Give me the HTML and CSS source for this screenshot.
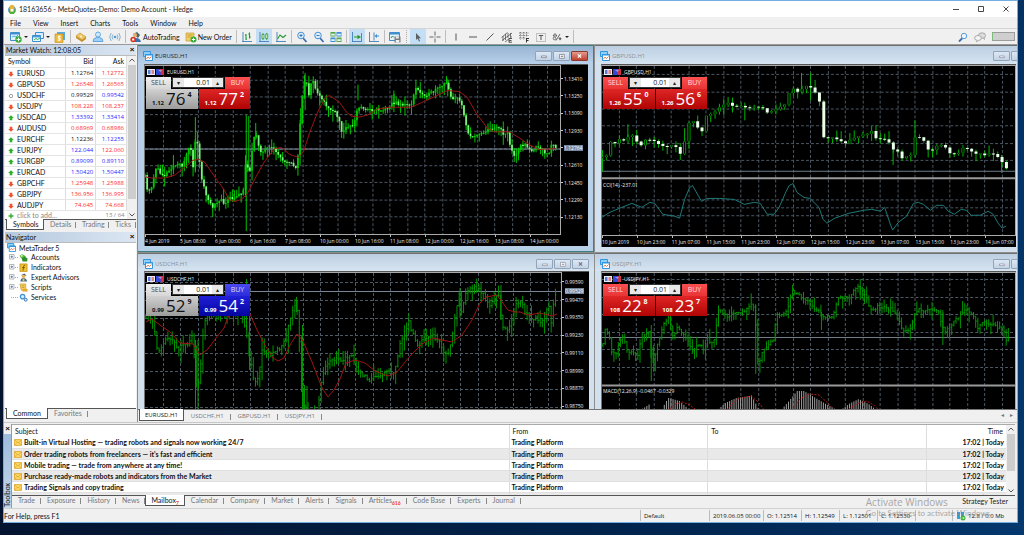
FILE: index.html
```html
<!DOCTYPE html>
<html lang="en">
<head>
<meta charset="utf-8">
<title>18163656 - MetaQuotes-Demo: Demo Account - Hedge</title>
<link rel="stylesheet" href="styles.css">
</head>
<body class="desktop">
<svg class="defs" aria-hidden="true">
  <symbol id="i-logo" viewBox="0 0 12 12"><circle cx="6" cy="7" r="4.600" fill="#3d8fd0"/><path d="M2 8a4 4 0 0 0 8 0l-3-3z" fill="#4caf3f"/><path d="M3 5q0-4 3-4t3 4l-1 4H4z" fill="#e8b73a"/><path d="M4.500 6h3v3h-3z" fill="#fff"/></symbol>
  <symbol id="i-newchart" viewBox="0 0 12 12"><path d="M.5 1.500h9v8h-9z" fill="#e4f2fc" stroke="#3f8fd0"/><path d="M1 2h8.500v1.500H1z" fill="#3f8fd0"/><path d="M2 6l2-1 2 1 2-2" stroke="#4aa7e0" fill="none"/><circle cx="8.500" cy="8.500" r="3.200" fill="#37b034"/><path d="M8.500 6.700v3.600M6.700 8.500h3.600" stroke="#fff"/></symbol>
  <symbol id="i-profiles" viewBox="0 0 12 12"><path d="M3.500 1.500h8v6h-8z" fill="#d9edfb" stroke="#3f8fd0"/><path d="M.5 4.500h8v6h-8z" fill="#eef8ff" stroke="#3f8fd0"/><path d="M1 5h7.500v1.400H1z" fill="#3f9fe0"/><path d="M2 9l2-1.500 1.500 1L8 7" stroke="#34b04a" fill="none"/></symbol>
  <symbol id="i-market" viewBox="0 0 12 12"><path d="M3 1h8v8H3z" fill="#5aa9dc"/><path d="M1 3h8v8.500H1z" fill="#efb93a" stroke="#c98d12" stroke-width=".6"/><path d="M6.800 5.300H4.200v1.900h2v2H3.500M5.200 4.300v6" stroke="#fff" stroke-width=".9" fill="none"/></symbol>
  <symbol id="i-book" viewBox="0 0 12 12"><path d="M1 5l4-3 6 4-4 3z" fill="#f0c964" stroke="#b5851c" stroke-width=".6"/><path d="M1 5v2l6 4 4-3V6L7 9z" fill="#c8902a"/><circle cx="6" cy="5.500" r="1" fill="#fff6d0"/></symbol>
  <symbol id="i-user" viewBox="0 0 12 12"><circle cx="6" cy="3.500" r="2.500" fill="#cde7fb" stroke="#4a9bd8" stroke-width=".8"/><path d="M1 10.500q0-3.500 3.500-4h3q3.500.5 3.500 4z" fill="#9fd0f5" stroke="#4a9bd8" stroke-width=".8"/></symbol>
  <symbol id="i-signal" viewBox="0 0 12 12"><circle cx="6" cy="6" r="1.300" fill="#4a9bd8"/><path d="M4 8.500q-2-2.500 0-5M8 8.500q2-2.500 0-5M2.200 10q-3-4 0-8M9.800 10q3-4 0-8" fill="none" stroke="#6f9fc4" stroke-width=".8"/></symbol>
  <symbol id="i-auto" viewBox="0 0 12 12"><path d="M3 3l4-2 3 3-2 3z" fill="#50606e"/><circle cx="5" cy="4" r="2" fill="#e4b36a"/><path d="M2 11q0-4 4-4t5 4z" fill="#3e6fa8"/><circle cx="3.200" cy="8.500" r="2.800" fill="#d9321f"/><path d="M2.200 7.500h2v2h-2z" fill="#fff"/></symbol>
  <symbol id="i-order" viewBox="0 0 12 12"><path d="M1 2h8v8H1z" fill="#f3cf62" stroke="#bb902a" stroke-width=".6"/><path d="M2.500 4h5M2.500 6h4" stroke="#a3812a" stroke-width=".6"/><circle cx="8.500" cy="8.500" r="3" fill="#2fae36"/><path d="M8.500 6.800v3.400M6.800 8.500h3.400" stroke="#fff"/></symbol>
  <symbol id="i-bars" viewBox="0 0 12 12"><path d="M2 1v10M1 10.500h10" stroke="#3f7fb5" stroke-width=".9"/><path d="M5 3v6M5 4h-1M5 8h1M8.500 1.500v6M8.500 3h-1.200M8.500 6h1.300" stroke="#239a2d" stroke-width="1.100"/></symbol>
  <symbol id="i-candles" viewBox="0 0 12 12"><path d="M2 1v10M1 10.500h10" stroke="#3f7fb5" stroke-width=".9"/><path d="M5 2v7M8.700 2v7" stroke="#239a2d" stroke-width=".8"/><path d="M4 3.500h2v4H4zM7.700 3h2v4.500h-2z" fill="#d6f0c9" stroke="#239a2d" stroke-width=".7"/></symbol>
  <symbol id="i-line" viewBox="0 0 12 12"><path d="M2 1v10M1 10.500h10" stroke="#3f7fb5" stroke-width=".9"/><path d="M2.500 8l2.500-4 3 2.500L11 4" fill="none" stroke="#239a2d" stroke-width="1.100"/></symbol>
  <symbol id="i-zoomin" viewBox="0 0 12 12"><path d="M7 7l3.500 4" stroke="#3c6fae" stroke-width="1.800"/><circle cx="5" cy="4.500" r="3.300" fill="#dceefb" stroke="#4a8fd0"/><path d="M5 3v3M3.500 4.500h3" stroke="#2f6fb0" stroke-width=".9"/></symbol>
  <symbol id="i-zoomout" viewBox="0 0 12 12"><path d="M7 7l3.500 4" stroke="#3c6fae" stroke-width="1.800"/><circle cx="5" cy="4.500" r="3.300" fill="#dceefb" stroke="#4a8fd0"/><path d="M3.500 4.500h3" stroke="#2f6fb0" stroke-width=".9"/></symbol>
  <symbol id="i-tile" viewBox="0 0 12 12"><path d="M.5 1h5v4.500h-5zM6.500 6.500h5V11h-5z" fill="#58a846"/><path d="M6.500 1h5v4.500h-5zM.5 6.500h5V11h-5z" fill="#3b8fd6"/><path d="M1.200 2.800h3.600v1.800H1.200zM7.200 2.800h3.600v1.800H7.200zM1.200 8.300h3.600v1.800H1.200zM7.200 8.300h3.600v1.800H7.200z" fill="#e9f5ff"/></symbol>
  <symbol id="i-autoscroll" viewBox="0 0 12 12"><path d="M1.500 1v10M1 10.500h10M10.500 2v8" stroke="#3f7fb5" stroke-width=".9"/><path d="M3 6h4.500" stroke="#239a2d"/><path d="M6.500 3.800L10 6 6.500 8.200z" fill="#239a2d"/></symbol>
  <symbol id="i-shift" viewBox="0 0 12 12"><path d="M1.500 1v10M1 10.500h10M6 1.500v8" stroke="#3f7fb5" stroke-width=".9"/><path d="M11 5H8" stroke="#3b8fd6"/><path d="M9 3L6.500 5 9 7z" fill="#3b8fd6"/></symbol>
  <symbol id="i-template" viewBox="0 0 12 12"><path d="M.5 1.500h10v8H.5z" fill="#e4f2fc" stroke="#3f8fd0"/><path d="M.5 2h10v1.500H.5z" fill="#3f8fd0"/><path d="M2 7l1.500-2L5 6.500" stroke="#239a2d" fill="none"/><path d="M5.500 5.500h6v6h-6z" fill="#787d82"/><path d="M6.800 5.500h3v2h-3zM6.800 9h3.500v2.500H6.800z" fill="#f1f1f1"/></symbol>
  <symbol id="i-cursor" viewBox="0 0 12 12"><path d="M4 2v7l1.600-1.400L7 10.500l1-.5-1.300-2.700H9z" fill="#5c6166"/></symbol>
  <symbol id="i-cross" viewBox="0 0 12 12"><path d="M6 .5v4M6 7.500v4M.5 6h4M7.500 6h4" stroke="#666"/><path d="M5.500 5.500h1v1h-1z" fill="#666"/></symbol>
  <symbol id="i-vline" viewBox="0 0 12 12"><path d="M6 2.500v7" stroke="#555"/></symbol>
  <symbol id="i-hline" viewBox="0 0 12 12"><path d="M2 6h8" stroke="#555"/></symbol>
  <symbol id="i-trend" viewBox="0 0 12 12"><path d="M2.500 9.500l7-7" stroke="#555"/></symbol>
  <symbol id="i-channel" viewBox="0 0 12 12"><path d="M.5 6.500l6-5M1 9.500L11 2M4 11l7-5.500M2 5v5M4.500 3v6M7 2v5M9.500 2v4" stroke="#555" stroke-width=".8"/><path d="M8 7.500h3M8 7.500v4M8 9.500h2.500M8 11.200h3" stroke="#444" stroke-width=".9"/></symbol>
  <symbol id="i-fibo" viewBox="0 0 12 12"><path d="M1 2h10M1 4.500h10M1 7h7M2.500 1v7.500M5.500 1v7.500M8.500 1v5" stroke="#666" stroke-width=".8" stroke-dasharray="1 .7"/><path d="M8.500 7v4.500M8.500 7.500H11M8.500 9.500h2" stroke="#333"/></symbol>
  <symbol id="i-text" viewBox="0 0 12 12"><path d="M1.500 2.500h9v8h-9z" fill="none" stroke="#777" stroke-width=".8" stroke-dasharray="1 1"/><path d="M3.800 4.500h4.400M6 4.500V9" stroke="#555"/></symbol>
  <symbol id="i-shapes" viewBox="0 0 12 12"><path d="M2 5l2-2.500L6 5zM5 9.500L9 3" fill="none" stroke="#555" stroke-width=".9"/><circle cx="3.500" cy="7.500" r="1.300" fill="none" stroke="#555" stroke-width=".8"/><path d="M7.500 7.500L9 6l1.700 1.700L9 9.500z" fill="#666"/></symbol>
  <symbol id="i-search" viewBox="0 0 12 12"><path d="M2 10.500L5.500 7" stroke="#3c6fae" stroke-width="1.800"/><circle cx="7" cy="5" r="2.700" fill="#eef6fd" stroke="#5a9bd8"/></symbol>
  <symbol id="i-chat" viewBox="0 0 12 12"><ellipse cx="8" cy="4.500" rx="3.500" ry="2.700" fill="#ddd" stroke="#999" stroke-width=".8"/><ellipse cx="4" cy="7" rx="3.400" ry="2.500" fill="#f5f5f5" stroke="#999" stroke-width=".8"/><path d="M3 9l-.5 2L5 9.300M9 7l1.500 1.600V6.500" fill="#eee" stroke="#999" stroke-width=".6"/></symbol>
  <symbol id="i-chart" viewBox="0 0 10 10"><path d="M.5.500h7v5h-7z" fill="#8fd0f8" stroke="#2f95dc"/><path d="M2.500 3.500h7v6h-7z" fill="#fff" stroke="#2f95dc"/><path d="M2.500 3h7v1.500h-7z" fill="#2f95dc"/><path d="M3.500 8l1.500-2 1.500 1.500 2-2" stroke="#e06030" stroke-width=".8" fill="none"/></symbol>
  <symbol id="i-oneclick" viewBox="0 0 8 6"><path d="M0 0h8v6H0z" fill="#e9edf8"/><path d="M1 1h2.500v4H1z" fill="#5977d8"/><path d="M4.500 1H7v4H4.500z" fill="#e08080"/></symbol>
  <symbol id="i-depth" viewBox="0 0 8 6"><path d="M0 0h8v6H0z" fill="#3248d8"/><path d="M4 0h4v6H5z" fill="#d03040"/><path d="M2 1h4L4.500 3z" fill="#999bd8"/></symbol>
  <symbol id="i-up" viewBox="0 0 6 6"><path d="M3 .2L5.800 3H4.300v2.300H1.700V3H.2z" fill="#27b227"/></symbol>
  <symbol id="i-down" viewBox="0 0 6 6"><path d="M3 5.800L.2 3h1.500V.7h2.600V3h1.500z" fill="#f0512e"/></symbol>
  <symbol id="i-same" viewBox="0 0 6 6"><circle cx="3" cy="3" r="1.700" fill="#fff" stroke="#888" stroke-width=".8"/></symbol>
  <symbol id="i-plus" viewBox="0 0 6 6"><path d="M3 .5v5M.5 3h5" stroke="#35b035" stroke-width="1.400"/></symbol>
  <symbol id="i-expand" viewBox="0 0 6 6"><path d="M.5.500h4.500v4.500H.5z" fill="#fff" stroke="#999" stroke-width=".7"/><path d="M2.750 1.500v2.500M1.500 2.750h2.500" stroke="#3c5fa0" stroke-width=".7"/></symbol>
  <symbol id="i-accounts" viewBox="0 0 10 10"><path d="M.5 3l3-2 4 2.500-1 3-4-.5z" fill="#5cbb3c"/><path d="M3 6l3-2 3.500 2-.5 3.500H4z" fill="#2f8f2a"/><circle cx="3" cy="3" r="1.200" fill="#d3f2c0"/></symbol>
  <symbol id="i-indicators" viewBox="0 0 10 10"><path d="M1 1h8v8.500H1z" fill="#f0c030" stroke="#b88a12" stroke-width=".7"/><path d="M6.800 2.500Q5.200 2 5 4L4.500 8.500M3.500 5h3" stroke="#6b4a00" stroke-width=".9" fill="none"/></symbol>
  <symbol id="i-experts" viewBox="0 0 10 10"><path d="M2 2.500L6 .5 8.500 3z" fill="#4d5c66"/><circle cx="5" cy="3.800" r="1.900" fill="#e6b25c"/><path d="M1.500 9.500q0-4 3.500-4t4 4z" fill="#3f6f9c"/><path d="M4 6h2v3.500H4z" fill="#f0c040"/></symbol>
  <symbol id="i-scripts" viewBox="0 0 10 10"><path d="M1 1h6.500v7H2.500z" fill="#f6cf5c" stroke="#c4922a" stroke-width=".7"/><path d="M3 3h3M3 5h3" stroke="#a87b1c" stroke-width=".6"/><path d="M4 6.500h5.500v3H4z" fill="#e9a82a"/></symbol>
  <symbol id="i-services" viewBox="0 0 10 10"><circle cx="4" cy="4" r="2.500" fill="#d9ecfb" stroke="#3f8fd0" stroke-width="1.400"/><circle cx="7.500" cy="7.500" r="1.600" fill="#d9ecfb" stroke="#2f70b8"/></symbol>
  <symbol id="i-mail" viewBox="0 0 8 7"><path d="M.4.600h7.200v5.800H.4z" fill="#ffd96a" stroke="#d9a020" stroke-width=".8"/><path d="M.6 1L4 4l3.400-3M.6 6L3 3.500M7.400 6L5 3.500" fill="none" stroke="#d9a020" stroke-width=".7"/></symbol>
  <symbol id="i-net" viewBox="0 0 10 10"><path d="M1 1h3v7H1zM5 1h3v7H5z" fill="#2fa2e4"/><circle cx="7" cy="7" r="2.500" fill="#3db03b"/><path d="M5.800 7h2.400M7.200 6l1 1-1 1" stroke="#fff" stroke-width=".6" fill="none"/></symbol>
</svg>

<div class="app">
  <header class="titlebar">
    <svg class="ico12"><use href="#i-logo"/></svg>
    <h1 class="titlebar-text">18163656 - MetaQuotes-Demo: Demo Account - Hedge</h1>
    <div class="winbtns">
      <button class="winbtn" aria-label="Minimize"><svg viewBox="0 0 8 8"><path d="M1 4.500h6" stroke="#333" stroke-width=".9"/></svg></button>
      <button class="winbtn" aria-label="Maximize"><svg viewBox="0 0 8 8"><path d="M1.500 1.500h5v5h-5z" fill="none" stroke="#333" stroke-width=".9"/></svg></button>
      <button class="winbtn" aria-label="Close"><svg viewBox="0 0 8 8"><path d="M1.500 1.500l5 5M6.500 1.500l-5 5" stroke="#333" stroke-width=".9"/></svg></button>
    </div>
  </header>
  <nav class="menubar">
    <button>File</button><button>View</button><button>Insert</button><button>Charts</button><button>Tools</button><button>Window</button><button>Help</button>
  </nav>
  <div class="toolbar">
    <button class="tool tool-drop" aria-label="New chart"><svg class="ico12"><use href="#i-newchart"/></svg><i class="caret"></i></button>
    <button class="tool tool-drop" aria-label="Profiles"><svg class="ico12"><use href="#i-profiles"/></svg><i class="caret"></i></button>
    <button class="tool" aria-label="Market"><svg class="ico12"><use href="#i-market"/></svg></button>
    <span class="sep"></span>
    <button class="tool" aria-label="Depth"><svg class="ico12"><use href="#i-book"/></svg></button>
    <button class="tool" aria-label="Account"><svg class="ico12"><use href="#i-user"/></svg></button>
    <button class="tool" aria-label="Signals"><svg class="ico12"><use href="#i-signal"/></svg></button>
    <span class="sep"></span>
    <button class="tool tool-text"><svg class="ico12"><use href="#i-auto"/></svg>AutoTrading</button>
    <button class="tool tool-text"><svg class="ico12"><use href="#i-order"/></svg>New Order</button>
    <span class="sep"></span>
    <button class="tool" aria-label="Bar chart"><svg class="ico12"><use href="#i-bars"/></svg></button>
    <button class="tool on" aria-label="Candlesticks"><svg class="ico12"><use href="#i-candles"/></svg></button>
    <button class="tool" aria-label="Line chart"><svg class="ico12"><use href="#i-line"/></svg></button>
    <span class="sep"></span>
    <button class="tool" aria-label="Zoom in"><svg class="ico12"><use href="#i-zoomin"/></svg></button>
    <button class="tool" aria-label="Zoom out"><svg class="ico12"><use href="#i-zoomout"/></svg></button>
    <button class="tool" aria-label="Tile windows"><svg class="ico12"><use href="#i-tile"/></svg></button>
    <span class="sep"></span>
    <button class="tool on" aria-label="Auto scroll"><svg class="ico12"><use href="#i-autoscroll"/></svg></button>
    <button class="tool" aria-label="Chart shift"><svg class="ico12"><use href="#i-shift"/></svg></button>
    <span class="sep"></span>
    <button class="tool" aria-label="Templates"><svg class="ico12"><use href="#i-template"/></svg></button>
    <span class="sep grip"></span>
    <button class="tool on" aria-label="Cursor"><svg class="ico12"><use href="#i-cursor"/></svg></button>
    <button class="tool" aria-label="Crosshair"><svg class="ico12"><use href="#i-cross"/></svg></button>
    <span class="sep"></span>
    <button class="tool" aria-label="Vertical line"><svg class="ico12"><use href="#i-vline"/></svg></button>
    <button class="tool" aria-label="Horizontal line"><svg class="ico12"><use href="#i-hline"/></svg></button>
    <button class="tool" aria-label="Trendline"><svg class="ico12"><use href="#i-trend"/></svg></button>
    <button class="tool" aria-label="Channel"><svg class="ico12"><use href="#i-channel"/></svg></button>
    <button class="tool" aria-label="Fibonacci"><svg class="ico12"><use href="#i-fibo"/></svg></button>
    <button class="tool" aria-label="Text"><svg class="ico12"><use href="#i-text"/></svg></button>
    <button class="tool tool-drop" aria-label="Shapes"><svg class="ico12"><use href="#i-shapes"/></svg><i class="caret"></i></button>
    <span class="sep"></span>
    <span class="grow"></span>
    <button class="tool" aria-label="Search"><svg class="ico12"><use href="#i-search"/></svg></button>
    <button class="tool" aria-label="Chat"><svg class="ico12"><use href="#i-chat"/></svg></button>
    <span class="level"></span>
  </div>

  <main class="work">
    <aside class="side">
      <section class="panel watch">
        <div class="panel-head"><h2>Market Watch: 12:08:05</h2><button class="x" aria-label="Close">×</button></div>
        <div class="watch-body">
          <table class="quotes">
            <colgroup><col class="c-sym"><col class="c-num"><col class="c-num"></colgroup>
            <thead><tr><th>Symbol</th><th>Bid</th><th>Ask</th></tr></thead>
            <tbody>
            <tr><td><svg class="ico6"><use href="#i-down"/></svg>EURUSD</td><td>1.12764</td><td class="dn">1.12772</td></tr>
            <tr><td><svg class="ico6"><use href="#i-down"/></svg>GBPUSD</td><td class="dn">1.26548</td><td class="dn">1.26565</td></tr>
            <tr><td><svg class="ico6"><use href="#i-same"/></svg>USDCHF</td><td>0.99529</td><td class="up">0.99542</td></tr>
            <tr><td><svg class="ico6"><use href="#i-down"/></svg>USDJPY</td><td class="dn">108.228</td><td class="dn">108.237</td></tr>
            <tr><td><svg class="ico6"><use href="#i-up"/></svg>USDCAD</td><td class="up">1.33392</td><td class="up">1.33414</td></tr>
            <tr><td><svg class="ico6"><use href="#i-down"/></svg>AUDUSD</td><td class="dn">0.68969</td><td class="dn">0.68986</td></tr>
            <tr><td><svg class="ico6"><use href="#i-up"/></svg>EURCHF</td><td>1.12236</td><td class="up">1.12255</td></tr>
            <tr><td><svg class="ico6"><use href="#i-up"/></svg>EURJPY</td><td class="up">122.044</td><td class="dn">122.060</td></tr>
            <tr><td><svg class="ico6"><use href="#i-up"/></svg>EURGBP</td><td class="up">0.89099</td><td class="up">0.89110</td></tr>
            <tr><td><svg class="ico6"><use href="#i-up"/></svg>EURCAD</td><td class="up">1.50420</td><td class="up">1.50447</td></tr>
            <tr><td><svg class="ico6"><use href="#i-down"/></svg>GBPCHF</td><td class="dn">1.25948</td><td class="dn">1.25988</td></tr>
            <tr><td><svg class="ico6"><use href="#i-down"/></svg>GBPJPY</td><td class="dn">136.956</td><td class="dn">136.995</td></tr>
            <tr><td><svg class="ico6"><use href="#i-down"/></svg>AUDJPY</td><td class="dn">74.645</td><td class="dn">74.668</td></tr>
            <tr class="add"><td><svg class="ico6"><use href="#i-plus"/></svg>click to add...</td><td colspan="2">13 / 64</td></tr>
            </tbody>
          </table>
          <div class="scroll"><svg viewBox="0 0 8 8"><path d="M1.500 5L4 2.500 6.500 5" fill="none" stroke="#555"/></svg><i class="thumb"></i><svg viewBox="0 0 8 8"><path d="M1.500 3L4 5.500 6.500 3" fill="none" stroke="#555"/></svg></div>
        </div>
        <div class="tabs"><button class="tab active">Symbols</button><button class="tab">Details</button><button class="tab">Trading</button><button class="tab">Ticks</button></div>
      </section>
      <section class="panel navi">
        <div class="panel-head"><h2>Navigator</h2><button class="x" aria-label="Close">×</button></div>
        <ul class="tree">
          <li class="root"><svg class="ico10"><use href="#i-chart"/></svg>MetaTrader 5</li>
          <li><svg class="ico6"><use href="#i-expand"/></svg><i class="dash"></i><svg class="ico10"><use href="#i-accounts"/></svg>Accounts</li>
          <li><svg class="ico6"><use href="#i-expand"/></svg><i class="dash"></i><svg class="ico10"><use href="#i-indicators"/></svg>Indicators</li>
          <li><svg class="ico6"><use href="#i-expand"/></svg><i class="dash"></i><svg class="ico10"><use href="#i-experts"/></svg>Expert Advisors</li>
          <li><svg class="ico6"><use href="#i-expand"/></svg><i class="dash"></i><svg class="ico10"><use href="#i-scripts"/></svg>Scripts</li>
          <li class="leaf"><i class="dash dash-long"></i><svg class="ico10"><use href="#i-services"/></svg>Services</li>
        </ul>
        <div class="tabs"><button class="tab active">Common</button><button class="tab">Favorites</button></div>
      </section>
    </aside>

    <section class="mdi">
      <div class="windows">
        <article class="win active">
          <div class="win-head"><svg class="ico10"><use href="#i-chart"/></svg><h3>EURUSD,H1</h3>
            <div class="ctl"><button aria-label="Minimize"><svg viewBox="0 0 17 10"><path d="M6 5h6v2H6z" fill="#fff" stroke="#556" stroke-width=".7"/></svg></button><button aria-label="Restore"><svg viewBox="0 0 17 10"><path d="M6 3h6v5H6zM8 5h2v1H8z" fill="#fff" stroke="#556" stroke-width=".7"/></svg></button><button class="ctl-close" aria-label="Close"><svg viewBox="0 0 17 10"><path d="M6.500 3l4 4M10.500 3l-4 4" stroke="#fff" stroke-width="1.600"/></svg></button></div>
          </div>
          <div class="chart">
            <div class="plot">
              <svg class="canvas" id="eurusd" viewBox="145 65 416 171" preserveAspectRatio="none"></svg>
              <div class="deal">
                <div class="deal-name"><svg class="ico8"><use href="#i-oneclick"/></svg><svg class="ico8"><use href="#i-depth"/></svg>EURUSD,H1</div>
                <div class="deal-top"><button class="side-btn gray">SELL</button><div class="vol"><button aria-label="Less">▾</button><input aria-label="Volume" value="0.01"><button aria-label="More">▴</button></div><button class="side-btn red">BUY</button></div>
                <div class="deal-low"><button class="price gray"><small>1.12</small><b>76</b><sup>4</sup></button><button class="price red"><small>1.12</small><b>77</b><sup>2</sup></button></div>
              </div>
            </div>
            <div class="prices"><span>1.13410</span><span>1.13250</span><span>1.13090</span><span>1.12930</span><span><mark>1.12764</mark></span><span>1.12610</span><span>1.12450</span><span>1.12290</span><span>1.12130</span></div>
            <div class="dates"><span>4 Jun 2019</span><span>5 Jun 08:00</span><span>6 Jun 00:00</span><span>6 Jun 16:00</span><span>7 Jun 08:00</span><span>10 Jun 00:00</span><span>10 Jun 16:00</span><span>11 Jun 08:00</span><span>12 Jun 00:00</span><span>12 Jun 16:00</span><span>13 Jun 08:00</span><span>14 Jun 00:00</span></div>
          </div>
        </article>

        <article class="win cut">
          <div class="win-head"><svg class="ico10"><use href="#i-chart"/></svg><h3>GBPUSD,H1</h3>
            <div class="ctl"><button aria-label="Minimize"><svg viewBox="0 0 17 10"><path d="M6 5h6v2H6z" fill="#fff" stroke="#778" stroke-width=".7"/></svg></button><button aria-label="Restore"><svg viewBox="0 0 17 10"><path d="M6 3h6v5H6zM8 5h2v1H8z" fill="#fff" stroke="#778" stroke-width=".7"/></svg></button></div>
          </div>
          <div class="chart no-axis">
            <div class="plot">
              <svg class="canvas" id="gbpusd" viewBox="602 65 415 171" preserveAspectRatio="none"></svg>
              <div class="deal">
                <div class="deal-name"><svg class="ico8"><use href="#i-oneclick"/></svg><svg class="ico8"><use href="#i-depth"/></svg>GBPUSD,H1</div>
                <div class="deal-top"><button class="side-btn red">SELL</button><div class="vol"><button aria-label="Less">▾</button><input aria-label="Volume" value="0.01"><button aria-label="More">▴</button></div><button class="side-btn red">BUY</button></div>
                <div class="deal-low"><button class="price red"><small>1.26</small><b>55</b><sup>0</sup></button><button class="price red"><small>1.26</small><b>56</b><sup>6</sup></button></div>
              </div>
              <span class="study study-cci">CCI(14) -237.01</span>
            </div>
            <div class="dates"><span>10 Jun 2019</span><span>10 Jun 23:00</span><span>11 Jun 07:00</span><span>11 Jun 15:00</span><span>11 Jun 23:00</span><span>12 Jun 07:00</span><span>12 Jun 15:00</span><span>12 Jun 23:00</span><span>13 Jun 07:00</span><span>13 Jun 15:00</span><span>13 Jun 23:00</span><span>14 Jun 07:00</span></div>
          </div>
        </article>

        <article class="win low">
          <div class="win-head"><svg class="ico10"><use href="#i-chart"/></svg><h3>USDCHF,H1</h3>
            <div class="ctl"><button aria-label="Minimize"><svg viewBox="0 0 17 10"><path d="M6 5h6v2H6z" fill="#fff" stroke="#778" stroke-width=".7"/></svg></button><button aria-label="Restore"><svg viewBox="0 0 17 10"><path d="M6 3h6v5H6zM8 5h2v1H8z" fill="#fff" stroke="#778" stroke-width=".7"/></svg></button><button aria-label="Close"><svg viewBox="0 0 17 10"><path d="M6.500 3l4 4M10.500 3l-4 4" stroke="#778" stroke-width="1.600"/></svg></button></div>
          </div>
          <div class="chart">
            <div class="plot">
              <svg class="canvas" id="usdchf" viewBox="145 273 416 136" preserveAspectRatio="none"></svg>
              <div class="deal">
                <div class="deal-name"><svg class="ico8"><use href="#i-oneclick"/></svg><svg class="ico8"><use href="#i-depth"/></svg>USDCHF,H1</div>
                <div class="deal-top"><button class="side-btn gray">SELL</button><div class="vol"><button aria-label="Less">▾</button><input aria-label="Volume" value="0.01"><button aria-label="More">▴</button></div><button class="side-btn blue">BUY</button></div>
                <div class="deal-low"><button class="price gray"><small>0.99</small><b>52</b><sup>9</sup></button><button class="price blue"><small>0.99</small><b>54</b><sup>2</sup></button></div>
              </div>
            </div>
            <div class="prices"><mark class="now">0.99529</mark><span>0.99590</span><span>0.99470</span><span>0.99350</span><span>0.99230</span><span>0.99110</span><span>0.98990</span><span>0.98870</span><span>0.98750</span></div>
          </div>
        </article>

        <article class="win low cut">
          <div class="win-head"><svg class="ico10"><use href="#i-chart"/></svg><h3>USDJPY,H1</h3>
            <div class="ctl"><button aria-label="Minimize"><svg viewBox="0 0 17 10"><path d="M6 5h6v2H6z" fill="#fff" stroke="#778" stroke-width=".7"/></svg></button><button aria-label="Restore"><svg viewBox="0 0 17 10"><path d="M6 3h6v5H6zM8 5h2v1H8z" fill="#fff" stroke="#778" stroke-width=".7"/></svg></button></div>
          </div>
          <div class="chart no-axis">
            <div class="plot">
              <svg class="canvas" id="usdjpy" viewBox="602 273 415 136" preserveAspectRatio="none"></svg>
              <div class="deal">
                <div class="deal-name"><svg class="ico8"><use href="#i-oneclick"/></svg><svg class="ico8"><use href="#i-depth"/></svg>USDJPY,H1</div>
                <div class="deal-top"><button class="side-btn red">SELL</button><div class="vol"><button aria-label="Less">▾</button><input aria-label="Volume" value="0.01"><button aria-label="More">▴</button></div><button class="side-btn red">BUY</button></div>
                <div class="deal-low"><button class="price red"><small>108</small><b>22</b><sup>8</sup></button><button class="price red"><small>108</small><b>23</b><sup>7</sup></button></div>
              </div>
              <span class="study study-macd">MACD(12,26,9) -0.0467 -0.0329</span>
            </div>
          </div>
        </article>
      </div>
      <div class="tabs chart-tabs"><button class="tab active">EURUSD,H1</button><button class="tab">USDCHF,H1</button><button class="tab">GBPUSD,H1</button><button class="tab">USDJPY,H1</button><span class="grow"></span><span class="arrows"><i>◂</i><i>▸</i></span></div>
    </section>
  </main>

  <section class="toolbox">
    <div class="strip"><button class="x" aria-label="Close">×</button><span class="strip-name">Toolbox</span></div>
    <div class="box">
      <div class="mail-wrap">
        <table class="mail">
          <colgroup><col class="m-subject"><col class="m-from"><col class="m-to"><col class="m-time"></colgroup>
          <thead><tr><th>Subject</th><th>From</th><th>To</th><th>Time</th></tr></thead>
          <tbody>
          <tr><td><svg class="ico-mail"><use href="#i-mail"/></svg>Built-in Virtual Hosting — trading robots and signals now working 24/7</td><td>Trading Platform</td><td></td><td>17:02 | Today</td></tr>
          <tr><td><svg class="ico-mail"><use href="#i-mail"/></svg>Order trading robots from freelancers — it's fast and efficient</td><td>Trading Platform</td><td></td><td>17:02 | Today</td></tr>
          <tr><td><svg class="ico-mail"><use href="#i-mail"/></svg>Mobile trading — trade from anywhere at any time!</td><td>Trading Platform</td><td></td><td>17:02 | Today</td></tr>
          <tr><td><svg class="ico-mail"><use href="#i-mail"/></svg>Purchase ready-made robots and indicators from the Market</td><td>Trading Platform</td><td></td><td>17:02 | Today</td></tr>
          <tr><td><svg class="ico-mail"><use href="#i-mail"/></svg>Trading Signals and copy trading</td><td>Trading Platform</td><td></td><td>17:02 | Today</td></tr>
          <tr><td><svg class="ico-mail"><use href="#i-mail"/></svg>Welcome!</td><td>Trading Platform</td><td></td><td>17:02 | Today</td></tr>
          </tbody>
        </table>
        <div class="scroll"><svg viewBox="0 0 8 8"><path d="M1.500 5L4 2.500 6.500 5" fill="none" stroke="#555"/></svg><i class="thumb"></i><svg viewBox="0 0 8 8"><path d="M1.500 3L4 5.500 6.500 3" fill="none" stroke="#555"/></svg></div>
      </div>
      <div class="tabs box-tabs"><button class="tab">Trade</button><button class="tab">Exposure</button><button class="tab">History</button><button class="tab">News</button><button class="tab active">Mailbox<sub>7</sub></button><button class="tab">Calendar</button><button class="tab">Company</button><button class="tab">Market</button><button class="tab">Alerts</button><button class="tab">Signals</button><button class="tab">Articles<sub>616</sub></button><button class="tab">Code Base</button><button class="tab">Experts</button><button class="tab">Journal</button><span class="grow"></span><button class="tester">Strategy Tester</button></div>
    </div>
  </section>

  <footer class="status">
    <span class="help">For Help, press F1</span>
    <span class="cell s-profile">Default</span>
    <span class="cell s-time">2019.06.05 00:00</span>
    <span class="cell s-val">O: 1.12514</span>
    <span class="cell s-val">H: 1.12549</span>
    <span class="cell s-val">L: 1.12501</span>
    <span class="cell s-val">C: 1.12530</span>
    <span class="cell s-gap"></span>
    <span class="cell s-net"><svg class="ico10"><use href="#i-net"/></svg>12.8 / 0.0 Mb</span>
  </footer>
</div>
<div class="activate"><p class="activate-title">Activate Windows</p><p class="activate-note">Go to Settings to activate Windows.</p></div>
<script src="charts.js"></script>
</body>
</html>
```

FILE: styles.css
```css
* { box-sizing: border-box; }
button, input {
  font: inherit; color: inherit; background: none; border: 0; padding: 0; margin: 0;
  min-width: 0; border-radius: 0;
}
h1, h2, h3, p, ul { margin: 0; padding: 0; font-size: inherit; font-weight: normal; }
.defs { display: none; }
.desktop {
  margin: 0; height: 100vh; overflow: hidden;
  display: flex; flex-direction: column;
  padding: 0 6px 12px 3px;
  font: 7px/10px Lato, "Open Sans", sans-serif; color: #111;
  background: linear-gradient(100deg, #04122c 0%, #041b3c 35%, #00224a 60%, #032c5c 85%, #04386e 100%);
}
.app {
  flex: 1; min-height: 0; display: flex; flex-direction: column;
  background: #f0f0f0; border: 1px solid #74aee0;
}
.grow { flex: 1; }
.ico12, .ico10, .ico8, .ico6, .ico-mail { flex: none; display: block; }
.ico12 { width: 12px; height: 12px; }
.ico10 { width: 10px; height: 10px; }
.ico8 { width: 8px; height: 6px; }
.ico6 { width: 6px; height: 6px; }
.ico-mail { width: 8px; height: 7px; }

.titlebar { flex: none; height: 16px; display: flex; align-items: center; background: #fff; padding: 0 7px 0 2px; gap: 1px; }
.titlebar .ico12 { width: 10px; height: 10px; margin-left: 1px; }
.titlebar-text { padding-left: 1px; flex: 1; color: #222; }
.winbtns { display: flex; gap: 17px; }
.winbtn, .winbtn svg { width: 8px; height: 8px; display: block; }

.menubar { flex: none; height: 11px; display: flex; align-items: center; gap: 12px; padding-left: 6px; }

.toolbar {
  flex: none; height: 17px; display: flex; align-items: center; gap: 1px;
  padding: 0 2px 0 4px; border-top: 1px solid #d4d4d4; border-bottom: 1px solid #9a9a9a;
}
.tool { flex: none; width: 16px; height: 15px; display: flex; align-items: center; justify-content: center; }
.tool.on { background: #c3def5; }
.tool-drop { width: 21px; gap: 2px; }
.tool-text { width: auto; gap: 1px; padding: 0 2px; }
.caret { border: 2px solid transparent; border-top-color: #222; border-bottom: 0; }
.sep { flex: none; width: 1px; height: 13px; background: #bdbdbd; margin: 0 1px; }
.grip { background: repeating-linear-gradient(#aaa 0 1px, transparent 1px 2px); margin: 0 2px; }
.level { width: 23px; height: 9px; background: #cfcfcf; border: 1px solid #9c9c9c; border-left: 1px solid #7dbb7d; margin-left: 3px; }

.work { flex: 1; min-height: 0; display: flex; }
.side { flex: none; width: 134px; display: flex; flex-direction: column; gap: 2px; padding: 0 1px 3px 1px; border-right: 1px solid #8b8b8b; }
.panel { display: flex; flex-direction: column; }
.panel-head { height: 10px; display: flex; align-items: center; justify-content: space-between; padding: 0 1px; background: linear-gradient(90deg, #b4c8de, #dbe6f2); }
.x { font: bold 8px/8px "Liberation Sans", sans-serif; width: 6px; }
.watch-body { display: flex; height: 164px; overflow: hidden; background: #fff; border-top: 1px solid #bbb; }
.quotes { flex: 1; height: max-content; border-collapse: collapse; table-layout: fixed; }
.quotes th, .quotes td { padding: 0 2px; height: 11px; line-height: 10px; text-align: right; border-right: 1px solid #ddd; border-bottom: 1px solid #e4e4e4; white-space: nowrap; font-weight: normal; }
.quotes td + td { font: 6px/10px "Open Sans", sans-serif; }
.quotes th:first-child, .quotes td:first-child { text-align: left; padding-left: 3px; }
.quotes td .ico6 { display: inline-block; margin: 0 3px 0 0; vertical-align: -1px; }
.quotes .up { color: #2a2aff; }
.quotes .dn { color: #ff2a2a; }
.quotes .add td { color: #888; border: 0; line-height: 8px; vertical-align: top; }
.c-sym { width: 60px; }
.scroll { flex: none; width: 9px; display: flex; flex-direction: column; align-items: center; background: #f0f0f0; }
.scroll svg { flex: none; width: 8px; height: 9px; }
.thumb { flex: 1; width: 8px; background: #cdcdcd; }
.watch .thumb { margin-bottom: 11px; }

.tabs { flex: none; display: flex; height: 11px; align-items: flex-start; border-top: 1px solid #555; padding-left: 1px; color: #777; }
.tab { position: relative; height: 9px; line-height: 9px; padding: 0 6px; white-space: nowrap; }
.tab::after { content: ""; position: absolute; right: 0; top: 2px; bottom: 1px; border-right: 1px solid #888; }
.tab.active { height: 11px; margin-top: -1px; line-height: 11px; background: #fff; color: #111; border: 1px solid #555; border-top: 0; }
.tab.active::after { display: none; }
.tab sub { font-size: 5px; font-weight: bold; line-height: 0; color: #f03a2a; vertical-align: -2px; }

.navi { flex: 1; min-height: 0; }
.tree { flex: 1; background: #fff; list-style: none; border-top: 1px solid #bbb; padding-left: 1px; }
.tree li { display: flex; align-items: center; height: 10px; padding-left: 3px; }
.tree .ico10 { width: 9px; height: 9px; margin-right: 3px; }
.tree .root { padding-left: 1px; height: 9px; }
.dash { width: 3px; border-top: 1px dotted #aaa; margin-right: 1px; }
.tree .leaf { padding-left: 5px; }
.dash-long { width: 7px; }

.mdi { flex: 1; min-width: 0; display: flex; flex-direction: column; }
.windows { flex: 1; min-height: 0; display: grid; grid-template-columns: 456fr 422fr; grid-template-rows: 207fr 156fr; background: #8d8d8d; gap: 1px; overflow: hidden; }
.win { min-width: 0; min-height: 0; overflow: hidden; display: flex; flex-direction: column; padding: 0 5px 5px 6px; background: #d3e0ee; border-top: 1px solid #707070; }
.win.active { background: #b8cfe8; border: 0 solid #3c8080; border-width: 1px 1px 1px 0; }
.win.low { padding-bottom: 0; }
.win.cut { padding-right: 1px; }
.win-head { flex: none; height: 18px; display: flex; align-items: center; gap: 2px; margin: 0 -5px 0 -6px; padding: 2px 5px 0; background: linear-gradient(#bccfe2, #d7e4f1); color: #8a929c; }
.active .win-head { background: linear-gradient(#98b4d2, #b9d1ea); color: #222; }
.low .win-head { height: 17px; }
.win-head h3 { flex: 1; font: 6px/10px "Open Sans", sans-serif; }
.ctl { display: flex; gap: 1px; }
.cut .ctl { margin-right: -12px; }
.ctl button { width: 17px; height: 10px; border: 1px solid #93a4b8; border-radius: 1px; background: linear-gradient(#dce8f4, #c3d4e6); }
.ctl svg { display: block; width: 15px; height: 8px; }
.ctl .ctl-close { background: linear-gradient(#e29a8c, #c2402c); border-color: #8a3a30; }
.chart {
  flex: 1; min-height: 0; display: grid; grid-template-columns: minmax(0, 1fr) 27px; grid-template-rows: minmax(0, 1fr) 11px;
  background: #000; color: #eee; font: 5px/6px "Open Sans", sans-serif; border-left: 1px solid #777; border-top: 1px solid #555;
}
.chart.no-axis { grid-template-columns: minmax(0, 1fr); }
.low .chart { grid-template-rows: minmax(0, 1fr); }
.plot { display: grid; grid-template: minmax(0, 1fr) / minmax(0, 1fr); overflow: hidden; border: 1px solid #aaa; border-left: 0; }
.low .plot { border-bottom: 0; }
.canvas { grid-area: 1 / 1; width: 100%; height: 100%; display: block; }
.prices { position: relative; display: flex; flex-direction: column; padding: 5px 0 9px; overflow: hidden; }
.prices span { flex: 1; display: flex; align-items: center; gap: 1px; }
.prices span::before { content: ""; width: 2px; height: 1px; background: #ccc; }
.low .prices { padding: 1px 0 0; margin-bottom: -6px; }
.prices mark { background: #7488a0; color: #fff; padding: 0 1px 0 0; }
.prices .now { position: absolute; left: 3px; top: 16px; }
.dates { display: grid; grid-template-columns: repeat(11, minmax(0, 35fr)) minmax(0, 31fr); align-items: start; }
.dates span { white-space: nowrap; padding-top: 3px; background: linear-gradient(#bbb, #bbb) 0 0 / 1px 2px no-repeat; }
.study { grid-area: 1 / 1; align-self: start; justify-self: start; padding-left: 1px; }
.study-cci { margin-top: 116px; }
.study-macd { margin-top: 115px; }

.deal { grid-area: 1 / 1; align-self: start; justify-self: start; width: 105px; padding: 2px 0 0 1px; }
.deal-name { display: flex; align-items: center; gap: 1px; height: 7px; padding-left: 1px; margin-bottom: 2px; }
.deal-name .ico8 + .ico8 { margin-right: 2px; }
.deal-top { display: grid; grid-template-columns: 25px 1fr 25px; }
.side-btn { height: 12px; font-size: 7px; line-height: 12px; }
.vol { display: grid; grid-template-columns: 11px 1fr 11px; height: 11px; margin: 0 1px; border: 1px solid #333; background: #e8e8e8; color: #222; align-items: stretch; }
.vol input { background: #fff; text-align: right; font-size: 7px; width: 100%; padding: 0 2px 0 0; }
.vol button { font: 6px/9px "DejaVu Sans", sans-serif; }
.deal-low { display: grid; grid-template-columns: 1fr 1fr; gap: 1px; }
.price { height: 20px; display: flex; align-items: center; justify-content: center; gap: 2px; }
.price small { font-size: 6px; font-weight: bold; line-height: 8px; align-self: flex-end; padding-bottom: 2px; }
.price b { font-size: 17px; line-height: 20px; font-weight: normal; }
.price sup { font-size: 7px; font-weight: bold; line-height: 8px; align-self: flex-start; padding-top: 2px; }
.side-btn.gray { background: linear-gradient(#f0f0f0, #d6d6d6); color: #444; }
.price.gray { background: linear-gradient(#d0d0d0, #9c9c9c); color: #111; }
.side-btn.red { background: linear-gradient(#fb5050, #e83434); color: #ffdede; }
.price.red { background: linear-gradient(#e02626, #b00404); color: #fff; }
.side-btn.blue { background: linear-gradient(#4a4af0, #2c2cdc); color: #dedeff; }
.price.blue { background: linear-gradient(#2020d8, #0404a0); color: #fff; }

.chart-tabs { height: 13px; border-top: 1px solid #777; background: #f0f0f0; }
.chart-tabs .tab { padding: 0 7px; margin-top: 2px; font: 6px/9px "Open Sans", sans-serif; }
.chart-tabs .tab.active { margin-top: -1px; height: 12px; line-height: 12px; padding: 0 5px; }
.arrows { display: flex; gap: 6px; padding-right: 4px; font: 6px/10px "DejaVu Sans", sans-serif; }
.arrows i { font-style: normal; }

.toolbox { flex: none; height: 86px; display: flex; border-top: 1px solid #c8c8c8; padding: 1px 2px 0 0; }
.strip { width: 7px; display: flex; flex-direction: column; align-items: center; padding-top: 1px; }
.strip-name { flex: 1; width: 7px; margin-top: 1px; writing-mode: vertical-rl; transform: rotate(180deg); line-height: 7px; background: linear-gradient(#c5d8ec, #9dbbdc); text-align: left; padding-top: 1px; }
.box { flex: 1; min-width: 0; display: flex; flex-direction: column; border-left: 1px solid #999; }
.mail-wrap { height: 71px; display: flex; overflow: hidden; background: #fff; border-top: 1px solid #aaa; }
.mail { flex: 1; height: max-content; table-layout: fixed; border-collapse: collapse; font-weight: bold; }
.mail th { font-weight: normal; text-align: left; height: 12px; padding: 0 3px; border-right: 1px solid #ddd; }
.mail td { height: 11px; line-height: 10px; padding: 0 2px; border-right: 1px solid #ddd; border-bottom: 1px solid #e0e0e0; white-space: nowrap; }
.mail tbody tr:nth-child(even) { background: #e9e9e9; }
.mail th:last-child, .mail td:last-child { text-align: right; border-right: 0; }
.mail .ico-mail { display: inline-block; vertical-align: -1px; margin-right: 2px; }
.m-subject { width: 50%; }
.m-from { width: 20%; }
.m-to { width: 22%; }
.m-time { width: 8%; }
.mail-wrap .thumb { flex: 0 0 37px; margin-bottom: auto; }
.box-tabs { padding-left: 0; height: 12px; }
.box-tabs .tab.active { padding: 0 5px; }
.tester { color: #222; padding-right: 7px; line-height: 11px; }

.status { flex: none; height: 14px; display: flex; align-items: center; border-top: 1px solid #d0d0d0; }
.help { flex: 1; }
.cell { border-left: 1px solid #bbb; padding-left: 3px; height: 11px; white-space: nowrap; display: flex; align-items: center; font: 6px/10px "Open Sans", sans-serif; }
.s-profile { width: 69px; }
.s-time { width: 54px; }
.s-val { width: 38px; }
.s-gap { width: 37px; }
.s-net { width: 65px; gap: 2px; }

.activate { position: absolute; right: 32px; bottom: 17px; color: #888; opacity: .7; }
.activate-title { font: 10px/12px "Open Sans", sans-serif; }
.activate-note { font-size: 8px; line-height: 10px; }
```

FILE: charts.js
```js
const NS = 'http://www.w3.org/2000/svg';

function path(svg, d, stroke, width, extra) {
  const p = document.createElementNS(NS, 'path');
  p.setAttribute('d', d);
  p.setAttribute('fill', 'none');
  p.setAttribute('stroke', stroke);
  p.setAttribute('stroke-width', width);
  Object.entries(extra || {}).forEach(([k, v]) => p.setAttribute(k, v));
  svg.appendChild(p);
}

function pairs(text) {
  return text.trim().split(/\s+/).map(s => s.split(',').map(Number));
}

function at(points, x) {
  for (let i = 1; i < points.length; i++) {
    const [x0, y0] = points[i - 1];
    const [x1, y1] = points[i];
    if (x <= x1) return y0 + (y1 - y0) * Math.max(0, (x - x0) / (x1 - x0));
  }
  return points[points.length - 1][1];
}

function random(seed) {
  return () => {
    seed = (seed * 16807) % 2147483647;
    return seed / 2147483647;
  };
}

function grid(svg, box, rows, first) {
  let d = '';
  rows.forEach(y => { d += `M${box.x0} ${y}H${box.x1}`; });
  for (let x = first; x < box.x1; x += 17.5) d += `M${Math.round(x) + 0.5} ${box.y0}V${box.y1}`;
  path(svg, d, '#4c5864', 1, { 'stroke-dasharray': '3 2' });
}

function curve(svg, points, color, extra) {
  path(svg, 'M' + points.map(p => p.join(' ')).join('L'), color, 1, extra);
}

/* Candles or bars that follow the given price track. */
function series(svg, points, opt) {
  const rnd = random(opt.seed);
  let wick = '', full = '', hollow = '';
  const end = points[points.length - 1][0];
  let open = points[0][1];
  for (let x = points[0][0]; x <= end; x += opt.step) {
    const close = at(points, x) + (rnd() - 0.5) * opt.noise;
    const top = Math.min(open, close), low = Math.max(open, close);
    const hi = top - rnd() * rnd() * opt.wick, lo = low + rnd() * rnd() * opt.wick;
    wick += `M${x} ${hi}V${lo + 1}`;
    if (opt.bars) {
      wick += `M${x - 1} ${open}H${x}M${x} ${close}H${x + 1}`;
    } else if (close > open) {
      full += `M${x} ${top}V${Math.max(low, top + 1)}`;
    } else {
      hollow += `M${x} ${top}V${Math.max(low, top + 1)}`;
    }
    open = close;
  }
  (opt.spikes || []).forEach(([x, a, b]) => { wick += `M${x} ${a}V${b}`; });
  path(svg, wick, opt.color, opt.line);
  if (opt.bars) return;
  path(svg, hollow, opt.color, opt.body);
  if (opt.body > 2) path(svg, hollow, '#000', opt.body - 1.600);
  path(svg, full, opt.fill, opt.body);
}

const eur = document.getElementById('eurusd');
grid(eur, { x0: 145, x1: 561, y0: 65, y1: 236 }, [79.5, 96.5, 114.5, 131.5, 149.5, 166.5, 183.5, 201.5, 218.5], 162.5);
path(eur, 'M145 149.500H561', '#8794a8', 1);
series(eur, pairs(`145,178 148,196 152,186 156,168 160,174 165,176 170,169 175,166 182,166 186,158 190,142 193,170
  196,136 199,155 202,180 206,196 212,209 216,203 221,202 226,205 230,200 236,200 240,192 243,198 246,162 250,172 253,146
  256,132 260,150 264,153 268,149 275,150 282,160 290,162 296,170 298,158 300,140 301,105 304,90 306,75 309,95 312,78
  316,88 322,100 328,107 335,112 340,122 343,135 347,124 352,127 355,122 358,108 363,107 370,110 378,109 385,110 392,103
  400,103 405,105 413,103 416,87 422,93 430,94 436,90 445,84 448,82 452,97 458,98 463,105 466,120 469,133 473,139
  478,134 485,132 490,130 495,127 500,128 505,135 509,131 511,148 515,156 520,148 525,144 530,151 538,148 545,152
  550,155 553,142 557,150`), {
  step: 2.19, noise: 4, wick: 12, seed: 11, color: '#00c800', fill: '#7cf07c', line: 1, body: 1.8,
  spikes: [[195.5, 117, 172], [197.5, 132, 160], [246.5, 115, 233], [249, 116, 172], [256, 123, 140], [301, 108, 157], [305.5, 72, 110], [358.500, 84, 100], [448.500, 78, 96], [394.500, 90, 112]]
});
curve(eur, pairs(`146,178 152,179 165,179 175,176 185,168 193,161 199,160 205,163 215,178 225,192 229,201 235,203 241,201
  247,196 255,180 265,162 275,149 282,148 290,155 299,158 304,152 310,133 318,112 326,97 330,95 340,102 347,112 352,116
  360,117 368,115 378,109 390,107 412,107 425,101 440,94 448,90 460,91 468,97 477,113 488,128 495,132 510,132 520,138
  530,145 540,150 557,149`), '#a01414');

const gbp = document.getElementById('gbpusd');
grid(gbp, { x0: 602, x1: 1017, y0: 65, y1: 236 }, [73.5, 91.5, 108.5, 125.5, 143.5, 160.5, 200.5, 208.5, 216.5], 618.5);
path(gbp, 'M602 171.500H1017', '#6f7d8c', 1);
series(gbp, pairs(`602,158 607,156 611,140 615,143 619,140 624,140 632,134 637,142 641,146 645,139 650,139 655,141 660,145
  666,147 672,146 677,148 681,155 685,142 688,123 694,120 699,128 703,132 707,115 715,112 720,106 725,103 730,103
  735,107 742,106 748,107 757,105 763,108 769,113 775,110 780,107 786,103 790,92 794,88 800,92 807,84 812,87 817,94
  821,103 824,138 830,138 837,138 845,143 852,140 860,136 868,133 873,130 877,138 883,140 888,138 893,148 898,150
  903,158 908,156 914,154 916,138 920,136 925,140 930,150 937,148 943,144 948,148 953,154 960,154 965,148 972,150
  978,154 985,155 992,153 1000,158 1004,163 1010,171`), {
  step: 4.37, noise: 2, wick: 10, seed: 5, color: '#00b400', fill: '#e8ffe8', line: 1, body: 3,
  spikes: [[628, 124, 140], [602.500, 150, 172], [685, 128, 150], [802.500, 72, 92], [811.500, 72, 100], [745.500, 102, 120], [894.500, 150, 165], [916.500, 120, 150], [1003.500, 155, 173]]
});
path(gbp, 'M602 178.500H1017', '#999', 2);
curve(gbp, pairs(`602,218 610,213 622,208 632,204 642,208 650,203 655,204 663,215 675,217 680,219 685,200 690,188 693,186
  702,202 707,199 720,199 735,200 745,205 755,203 761,204 768,215 775,215 780,208 787,192 790,186 794,184 798,193
  805,198 811,199 820,208 824,220 828,224 836,219 850,214 865,211 873,210 882,212 886,208 891,223 894,231 900,223
  908,217 915,204 920,203 925,205 932,211 938,206 945,206 950,212 956,215 963,210 968,211 973,216 982,216 990,212
  995,215 1000,224 1004,229 1008,227`), '#1f7a7a');

const chf = document.getElementById('usdchf');
grid(chf, { x0: 145, x1: 561, y0: 273, y1: 409 }, [282.5, 300.5, 318.5, 335.5, 353.5, 371.5, 389.5, 407.5], 162.5);
path(chf, 'M145 291.500H561', '#7a8796', 1);
series(chf, pairs(`146,316 150,318 154,325 157,350 161,348 166,338 172,338 178,350 183,345 188,345 193,335 196,380 199,385
  202,350 204,320 210,314 222,312 240,312 247,335 250,360 255,385 259,375 262,350 266,350 272,355 280,348 286,340
  290,318 294,305 297,308 300,350 302,405 308,412 318,412 320,385 325,368 332,360 340,360 345,358 352,355 358,370
  364,376 370,380 377,376 385,372 393,372 396,365 400,345 405,335 409,322 413,335 418,345 425,337 432,335 440,343
  445,355 448,355 452,340 456,310 459,300 462,315 465,295 470,290 475,288 482,292 490,305 495,300 498,290 500,310
  503,328 508,330 511,325 515,305 520,300 525,312 530,318 537,318 542,322 546,312 549,308 551,325 554,298 557,293`), {
  step: 2.19, noise: 4, wick: 15, seed: 23, color: '#009600', line: 1, bars: true,
  spikes: [[195.500, 340, 409], [198, 340, 409], [302.500, 325, 409], [304.500, 385, 409], [307, 386, 409], [249.500, 316, 370], [296.500, 297, 312], [246.500, 279, 330], [501, 285, 320], [460, 288, 318]]
});
curve(chf, pairs(`146,322 152,319 160,325 170,332 180,343 193,344 200,355 208,349 216,338 224,328 228,317 240,308 250,314
  258,332 266,347 273,358 278,361 284,358 290,345 297,334 303,341 312,362 322,388 328,397 334,390 340,379 346,363
  355,360 365,363 375,371 388,376 397,372 410,356 422,344 433,338 442,340 452,342 462,335 472,320 480,303 486,297
  497,295 508,310 515,312 520,312 528,315 540,313 552,316 557,314`), '#a01414');

const jpy = document.getElementById('usdjpy');
grid(jpy, { x0: 602, x1: 1017, y0: 273, y1: 409 }, [279.5, 297.5, 314.5, 332.5, 349.5, 367.5], 618.5);
path(jpy, 'M602 337.500H1017', '#6f7d8c', 1);
series(jpy, pairs(`603,345 605,328 609,335 612,352 616,355 620,340 624,337 628,355 632,352 638,355 641,340 645,335 650,330
  652,370 655,355 660,338 665,322 669,318 673,335 678,328 685,335 692,350 700,345 705,350 708,338 712,345 716,335
  718,310 722,310 727,318 732,314 738,312 745,312 750,308 752,303 756,312 757,360 760,362 763,352 768,345 775,340
  777,312 782,316 788,310 793,292 800,293 806,302 810,300 815,308 820,312 823,318 828,316 834,318 838,300 843,297
  850,298 855,291 861,286 865,293 870,305 873,310 880,306 888,308 895,310 900,320 905,332 912,328 917,312 920,308
  925,312 932,310 940,310 943,325 946,332 952,325 958,320 963,312 970,310 976,318 980,328 985,320 992,324 1000,328
  1005,328 1008,340 1012,336`), {
  step: 2.19, noise: 3, wick: 12, seed: 31, color: '#009600', line: 1, bars: true,
  spikes: [[651.500, 325, 381], [756.500, 305, 374], [861.500, 279, 300], [944.500, 310, 345], [822.500, 312, 330], [654, 345, 372]]
});
path(jpy, 'M602 385.500H1017', '#999', 2);
let bars = '';
const macd = pairs(`640,410 644,408 650,404 651,410 662,410 666,402 669,398 680,401 690,410 718,410 726,403 737,398 750,396
  752,395 760,410 782,410 790,401 798,391 805,391 820,400 838,410 842,410 850,404 860,399 870,404 878,410`);
for (let x = 640.5; x < 880; x += 2.19) {
  const y = at(macd, x);
  if (y < 409) bars += `M${x} ${y}V409`;
}
path(jpy, bars, '#a0a0a0', 1);
const dash = { 'stroke-dasharray': '2 1.500' };
curve(jpy, pairs('670,409 676,404 683,402 690,405 697,410'), '#c01818', dash);
curve(jpy, pairs('728,409 738,399 752,396 760,403 765,410'), '#c01818', dash);
curve(jpy, pairs('794,409 801,399 810,394 820,395 830,404 835,410'), '#c01818', dash);
curve(jpy, pairs('850,409 860,403 868,401 875,405 880,410'), '#c01818', dash);
```
